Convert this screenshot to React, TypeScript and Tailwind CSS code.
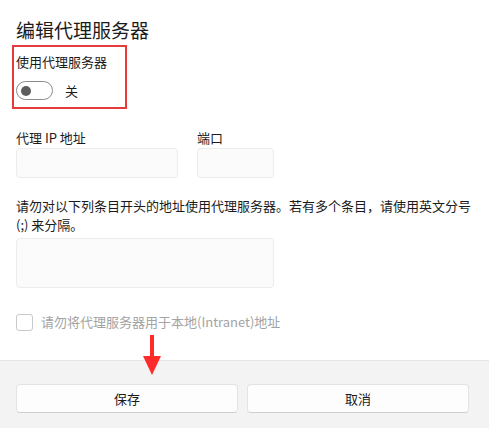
import React from 'react'

const font = {
  fontFamily: '"Noto Sans CJK SC", "Noto Sans", sans-serif',
}

function Field({ className }: { className: string }) {
  return (
    <div
      className={`rounded-[4px] border border-[#ececec] bg-[#fbfbfb] ${className}`}
    />
  )
}

export default function App() {
  return (
    <div
      className="relative flex h-[428px] w-[489px] flex-col overflow-hidden bg-white text-[#1b1b1b]"
      style={font}
    >
      <div className="flex-1 pl-4 pr-5">
        <h1 className="mt-[17px] text-[19px] leading-[26px] font-normal">
          编辑代理服务器
        </h1>

        <div className="mt-[2px] ml-[-4px] w-[115px] h-[64px] border-2 border-[#e53b3b] pl-[2px] pt-[5px]">
          <div className="text-[13px] leading-[20px]">使用代理服务器</div>
          <div className="mt-[9px] flex items-center gap-3">
            <div className="flex h-[19px] w-[37px] items-center rounded-full border border-[#8b8b8b] pl-[4px]">
              <div className="h-[10px] w-[10px] rounded-full bg-[#5d5d5d]" />
            </div>
            <span className="text-[13px] leading-[18px]">关</span>
          </div>
        </div>

        <div className="mt-[20px] flex gap-[19px]">
          <div className="flex flex-col">
            <span className="text-[13px] leading-[18px]">代理 IP 地址</span>
            <Field className="mt-[1px] h-[30px] w-[162px]" />
          </div>
          <div className="flex flex-col">
            <span className="text-[13px] leading-[18px]">端口</span>
            <Field className="mt-[1px] h-[30px] w-[77px]" />
          </div>
        </div>

        <p className="mt-[18px] whitespace-nowrap text-[13px] leading-[19px]">
          请勿对以下列条目开头的地址使用代理服务器。若有多个条目，请使用英文分号
          <br />
          (;) 来分隔。
        </p>
        <Field className="mt-[4px] h-[50px] w-[258px]" />

        <div className="mt-[25px] flex items-center gap-2">
          <div className="h-[17px] w-[17px] rounded-[3px] border border-[#c9c9c9] bg-white" />
          <span className="text-[13px] leading-[18px] text-[#a3a3a3]">
            请勿将代理服务器用于本地(Intranet)地址
          </span>
        </div>
      </div>

      <div className="flex h-[68px] gap-[9px] border-t border-[#e6e6e6] bg-[#f3f3f3] pt-[23px] pl-4 pr-5">
        <button className="h-[29px] w-[222px] rounded-[4px] border border-[#e3e3e3] border-b-[#cfcfcf] bg-[#fdfdfd] text-[13px] text-[#1b1b1b]">
          保存
        </button>
        <button className="h-[29px] w-[222px] rounded-[4px] border border-[#e3e3e3] border-b-[#cfcfcf] bg-[#fdfdfd] text-[13px] text-[#1b1b1b]">
          取消
        </button>
      </div>

      <svg
        className="absolute left-[142px] top-[335px]"
        width="20"
        height="42"
        viewBox="0 0 20 42"
      >
        <rect x="8" y="0" width="4" height="24" fill="#ff2b2b" />
        <polygon points="1,21 19,21 10,40" fill="#ff2b2b" />
      </svg>
    </div>
  )
}
